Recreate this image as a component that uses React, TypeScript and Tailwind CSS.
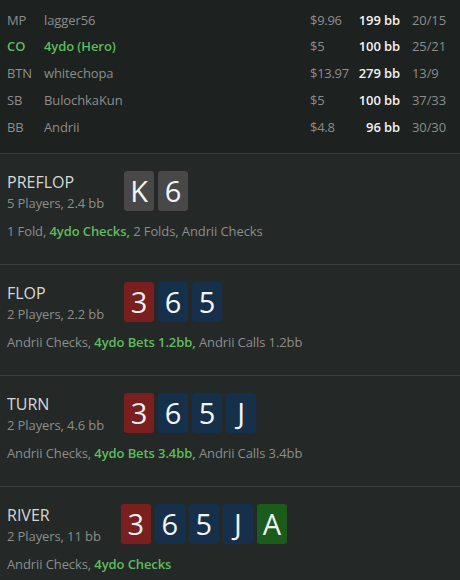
import React from 'react';

type Suit = 'gray' | 'red' | 'blue' | 'green';

const cardBg: Record<Suit, string> = {
  gray: 'bg-[#474847]',
  red: 'bg-[#7a1e1e]',
  blue: 'bg-[#15304a]',
  green: 'bg-[#1a5c1a]',
};

const players = [
  { pos: 'MP', name: 'lagger56', money: '$9.96', bb: '199 bb', stat: '20/15' },
  { pos: 'CO', name: '4ydo (Hero)', money: '$5', bb: '100 bb', stat: '25/21', hero: true },
  { pos: 'BTN', name: 'whitechopa', money: '$13.97', bb: '279 bb', stat: '13/9' },
  { pos: 'SB', name: 'BulochkaKun', money: '$5', bb: '100 bb', stat: '37/33' },
  { pos: 'BB', name: 'Andrii', money: '$4.8', bb: '96 bb', stat: '30/30' },
];

type Street = {
  title: string;
  sub: string;
  cards: [string, Suit][];
  actions: { text: string; hero?: boolean }[];
};

const streets: Street[] = [
  {
    title: 'PREFLOP',
    sub: '5 Players, 2.4 bb',
    cards: [['K', 'gray'], ['6', 'gray']],
    actions: [
      { text: '1 Fold, ' },
      { text: '4ydo Checks,', hero: true },
      { text: ' 2 Folds, Andrii Checks' },
    ],
  },
  {
    title: 'FLOP',
    sub: '2 Players, 2.2 bb',
    cards: [['3', 'red'], ['6', 'blue'], ['5', 'blue']],
    actions: [
      { text: 'Andrii Checks, ' },
      { text: '4ydo Bets 1.2bb,', hero: true },
      { text: ' Andrii Calls 1.2bb' },
    ],
  },
  {
    title: 'TURN',
    sub: '2 Players, 4.6 bb',
    cards: [['3', 'red'], ['6', 'blue'], ['5', 'blue'], ['J', 'blue']],
    actions: [
      { text: 'Andrii Checks, ' },
      { text: '4ydo Bets 3.4bb,', hero: true },
      { text: ' Andrii Calls 3.4bb' },
    ],
  },
  {
    title: 'RIVER',
    sub: '2 Players, 11 bb',
    cards: [['3', 'red'], ['6', 'blue'], ['5', 'blue'], ['J', 'blue'], ['A', 'green']],
    actions: [
      { text: 'Andrii Checks, ' },
      { text: '4ydo Checks', hero: true },
    ],
  },
];

const Card = ({ rank, suit }: { rank: string; suit: Suit }) => (
  <div
    className={`w-[30px] h-[40px] rounded-[3px] flex items-center justify-center text-[29px] leading-none text-[#f4f4f4] ${cardBg[suit]}`}
  >
    {rank}
  </div>
);

export default function App() {
  return (
    <div
      className="w-[460px] h-[580px] overflow-hidden bg-[#1d211f] text-[13px] tracking-[-0.1px] text-[#8b8e8c]"
      style={{ fontFamily: '"Open Sans", "Noto Sans", sans-serif' }}
    >
      <div className="pt-[7px] pb-[12px] pl-[7px]">
        {players.map((p) => (
          <div key={p.pos} className="h-[26.75px] flex items-center">
            <span className={`w-[37px] ${p.hero ? 'text-[#5cbd5c] font-semibold' : ''}`}>{p.pos}</span>
            <span className={`w-[266px] ${p.hero ? 'text-[#5cbd5c] font-semibold' : ''}`}>{p.name}</span>
            <span className="w-[48px] tracking-[-0.3px]">{p.money}</span>
            <span className="w-[42px] text-right text-[#f2f2f2] font-semibold whitespace-nowrap">{p.bb}</span>
            <span className="ml-[12px]">{p.stat}</span>
          </div>
        ))}
      </div>

      {streets.map((s) => (
        <div key={s.title} className="h-[111px] border-t border-[#3a3f3c] bg-[#242826] px-[7px] pt-[17px]">
          <div className="flex items-start gap-5">
            <div className="pt-[1px]">
              <div className="text-[16px] leading-[20px] tracking-normal text-[#d6d8d7]">{s.title}</div>
              <div className="mt-[2px] leading-[18px]">{s.sub}</div>
            </div>
            <div className="flex gap-[4px]">
              {s.cards.map(([r, suit], i) => (
                <Card key={i} rank={r} suit={suit} />
              ))}
            </div>
          </div>
          <div className="mt-[10px] leading-[18px]">
            {s.actions.map((a, i) => (
              <span key={i} className={a.hero ? 'text-[#5cbd5c] font-semibold' : ''}>
                {a.text}
              </span>
            ))}
          </div>
        </div>
      ))}
    </div>
  );
}
